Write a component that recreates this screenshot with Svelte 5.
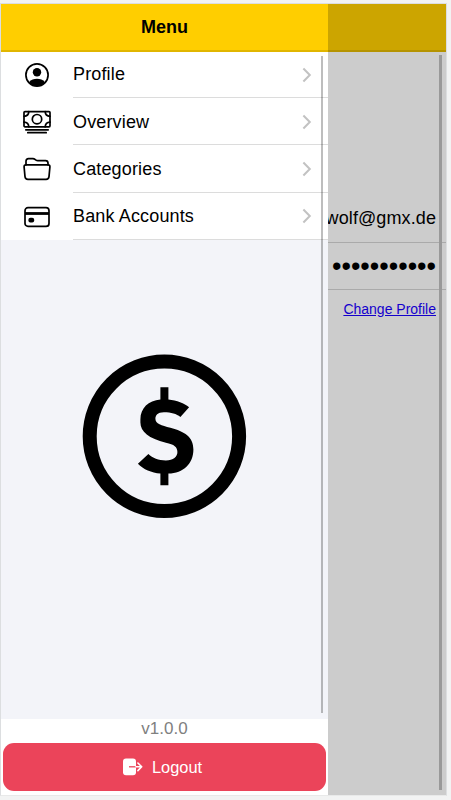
<script>
  const items = [
    { label: 'Profile', icon: 'profile', height: 46 },
    { label: 'Overview', icon: 'cash', height: 47 },
    { label: 'Categories', icon: 'folder', height: 48 },
    { label: 'Bank Accounts', icon: 'card', height: 47 }
  ];
</script>

<div class="screen">
  <div class="device">
    <aside class="menu">
      <header><h1>Menu</h1></header>
      <main>
        <nav>
          {#each items as item}
            <div class="item {item.icon}" style="height: {item.height}px">
              <svg class="icon" viewBox="0 0 28 28" fill="none" stroke="#000" stroke-width="1.7" stroke-linejoin="round" stroke-linecap="round">
                {#if item.icon === 'profile'}
                  <circle cx="14" cy="14" r="11.1" />
                  <circle cx="14" cy="11.3" r="4.2" fill="#000" stroke="none" />
                  <path d="M6 21.2C8 18.6 11 17.7 14 17.7s6 .9 8 3.5c-2 2.5-5 3.9-8 3.9s-6-1.4-8-3.9Z" fill="#000" stroke="none" />
                {:else if item.icon === 'cash'}
                  <rect x="1" y="3.6" width="26" height="15.2" rx="1" />
                  <circle cx="14" cy="11.2" r="4.7" />
                  <path d="M1 8.3Q5.6 8.2 5.8 3.6M27 8.3Q22.4 8.2 22.2 3.6M1 14.1Q5.6 14.2 5.8 18.8M27 14.1Q22.4 14.2 22.2 18.8" />
                  <path d="M2.8 21.8H25.2M4.8 24.7H23.2" />
                {:else if item.icon === 'folder'}
                  <path d="M3 9.8V6.2Q3 3.7 5.5 3.7H10Q11 3.7 11.8 4.3L13 5.1Q13.7 5.6 14.8 5.6H22.5Q25 5.6 25 8.1V9.8" />
                  <path d="M3 9.8H25Q27.1 9.8 26.9 12L26 21.6Q25.7 24.3 23.1 24.3H4.9Q2.3 24.3 2 21.6L1.1 12Q.9 9.8 3 9.8Z" />
                {:else}
                  <rect x="2" y="4.7" width="24" height="18.7" rx="3" />
                  <path d="M2 10.5H26" stroke-width="2.8" stroke-linecap="butt" />
                  <rect x="5.4" y="14.7" width="5.8" height="4.8" rx="2" fill="#000" stroke="none" />
                {/if}
              </svg>
              <div class="label">
                <span>{item.label}</span>
                <svg class="chevron" viewBox="0 0 10 16" fill="none" stroke="#c2c2c2" stroke-width="2"><path d="M1.4 1.5 7.8 8 1.4 14.5" /></svg>
              </div>
            </div>
          {/each}
        </nav>
        <div class="logo">
          <svg viewBox="0 0 164 164" width="164" height="164">
            <circle cx="82.4" cy="82.3" r="74.7" fill="none" stroke="#000" stroke-width="14" />
            <path transform="translate(.4 .3)" d="M78 33h8v12.2C94.5 46 101.8 48.8 106.7 53L98 62.6C94 59.7 89 58 81.5 58C75 58 73 61.5 73 64.4C73 69.5 79 71 88 73.5C102 77.4 111 82.5 111 95.2C111 109.5 101 118.8 86 119.3V131H78V119.3C69 118.5 61 115.2 55.5 109.5L66 99.7C70.2 103.8 76 106.1 83.5 106.1C91 106.1 95 102.7 95 97.8C95 92.5 91.8 90.2 83.5 88.4C66.5 84.4 58 77.5 58 68.3V65C58 54 66 46 78 45.2Z" />
          </svg>
        </div>
        <i class="scrollbar"></i>
      </main>
      <footer>
        <p>v1.0.0</p>
        <button>
          <svg width="21" height="18" viewBox="0 0 21 18" fill="none">
            <rect x="1" y=".4" width="13" height="16.8" rx="3" fill="#fff" />
            <path d="M7 8.8H14" stroke="#eb445a" stroke-width="1.3" />
            <path d="M14 8.8H19.6M15.9 5 19.7 8.8 15.9 12.6" stroke="#fff" stroke-width="1.6" stroke-linecap="round" stroke-linejoin="round" />
          </svg>
          <span>Logout</span>
        </button>
      </footer>
    </aside>
    <section class="page">
      <div class="bar"></div>
      <div class="row email"><span>wolf@gmx.de</span></div>
      <div class="row password"><span>•••••••••••</span></div>
      <a href="#profile">Change Profile</a>
      <i class="scrollbar"></i>
    </section>
  </div>
</div>

<style>
  :global(body) { background: #f2f3f3; }
  .screen {
    box-sizing: border-box;
    width: 451px;
    height: 800px;
    padding-top: 3px;
    overflow: hidden;
    background: #f2f3f3;
    font-family: "Liberation Sans", Arial, sans-serif;
    font-size: 18px;
    color: #000;
  }
  .device {
    box-sizing: border-box;
    width: 447px;
    height: 793px;
    border: 1px solid #dcdee0;
    border-bottom-color: #e8e9e9;
    display: flex;
  }
  .menu {
    width: 327px;
    display: flex;
    flex-direction: column;
    background: #fff;
  }
  header, .bar {
    box-sizing: border-box;
    height: 48px;
    flex: none;
    background: #ffce00;
    border-bottom: 2px solid #e1b600;
  }
  header { display: flex; align-items: center; justify-content: center; }
  h1 { margin: 0; font-size: 18px; line-height: 24px; }
  main {
    position: relative;
    height: 667px;
    display: flex;
    flex-direction: column;
    background: #f3f4f9;
  }
  nav { background: #fff; }
  .item { display: flex; padding-left: 22px; }
  .icon { width: 28px; height: 28px; align-self: center; margin-right: 22px; }
  .label {
    flex: 1;
    display: flex;
    align-items: center;
    justify-content: space-between;
    padding-right: 16px;
    border-bottom: 1px solid #dcdcdc;
  }
  .label span { line-height: 24px; letter-spacing: .15px; }
  .profile .label span { padding-bottom: 2px; }
  .cash .label { padding-top: 1px; }
  .chevron { width: 10px; height: 16px; }
  .logo { padding: 114px 0 0 81px; line-height: 0; }
  .logo svg { overflow: visible; }
  .scrollbar {
    position: absolute;
    width: 2px;
    background: rgba(0, 0, 0, .26);
    top: 4px;
    bottom: 6px;
    right: 5px;
  }
  footer { display: flex; flex-direction: column; }
  p {
    margin: 0;
    height: 24px;
    line-height: 20px;
    font-size: 17px;
    text-align: center;
    color: #808080;
  }
  button {
    margin: 0 2px;
    height: 48px;
    padding: 0 5px 0 0;
    border: 0;
    border-radius: 11px;
    background: #eb445a;
    color: #fff;
    font: 16.4px "Liberation Sans", Arial, sans-serif;
    display: flex;
    align-items: center;
    justify-content: center;
    gap: 9px;
  }
  .page {
    position: relative;
    width: 118px;
    display: flex;
    flex-direction: column;
    overflow: hidden;
    background: #ccc;
  }
  .bar { background: #cca500; border-color: #b59300; }
  .row {
    box-sizing: border-box;
    display: flex;
    justify-content: flex-end;
    padding-right: 10px;
    border-bottom: 1px solid #aaa;
  }
  .email { height: 191px; align-items: flex-end; }
  .email span { line-height: 24px; padding-bottom: 12px; letter-spacing: .1px; }
  .password { height: 47px; align-items: center; }
  .password span { font-size: 27px; line-height: 30px; padding-bottom: 1px; }
  a {
    align-self: flex-end;
    margin: 10px 10px 0 0;
    font-size: 14px;
    line-height: 18px;
    color: #1400cc;
  }
  .page .scrollbar { top: 51px; right: 4px; width: 3px; bottom: 5px; background: #999; }
</style>
